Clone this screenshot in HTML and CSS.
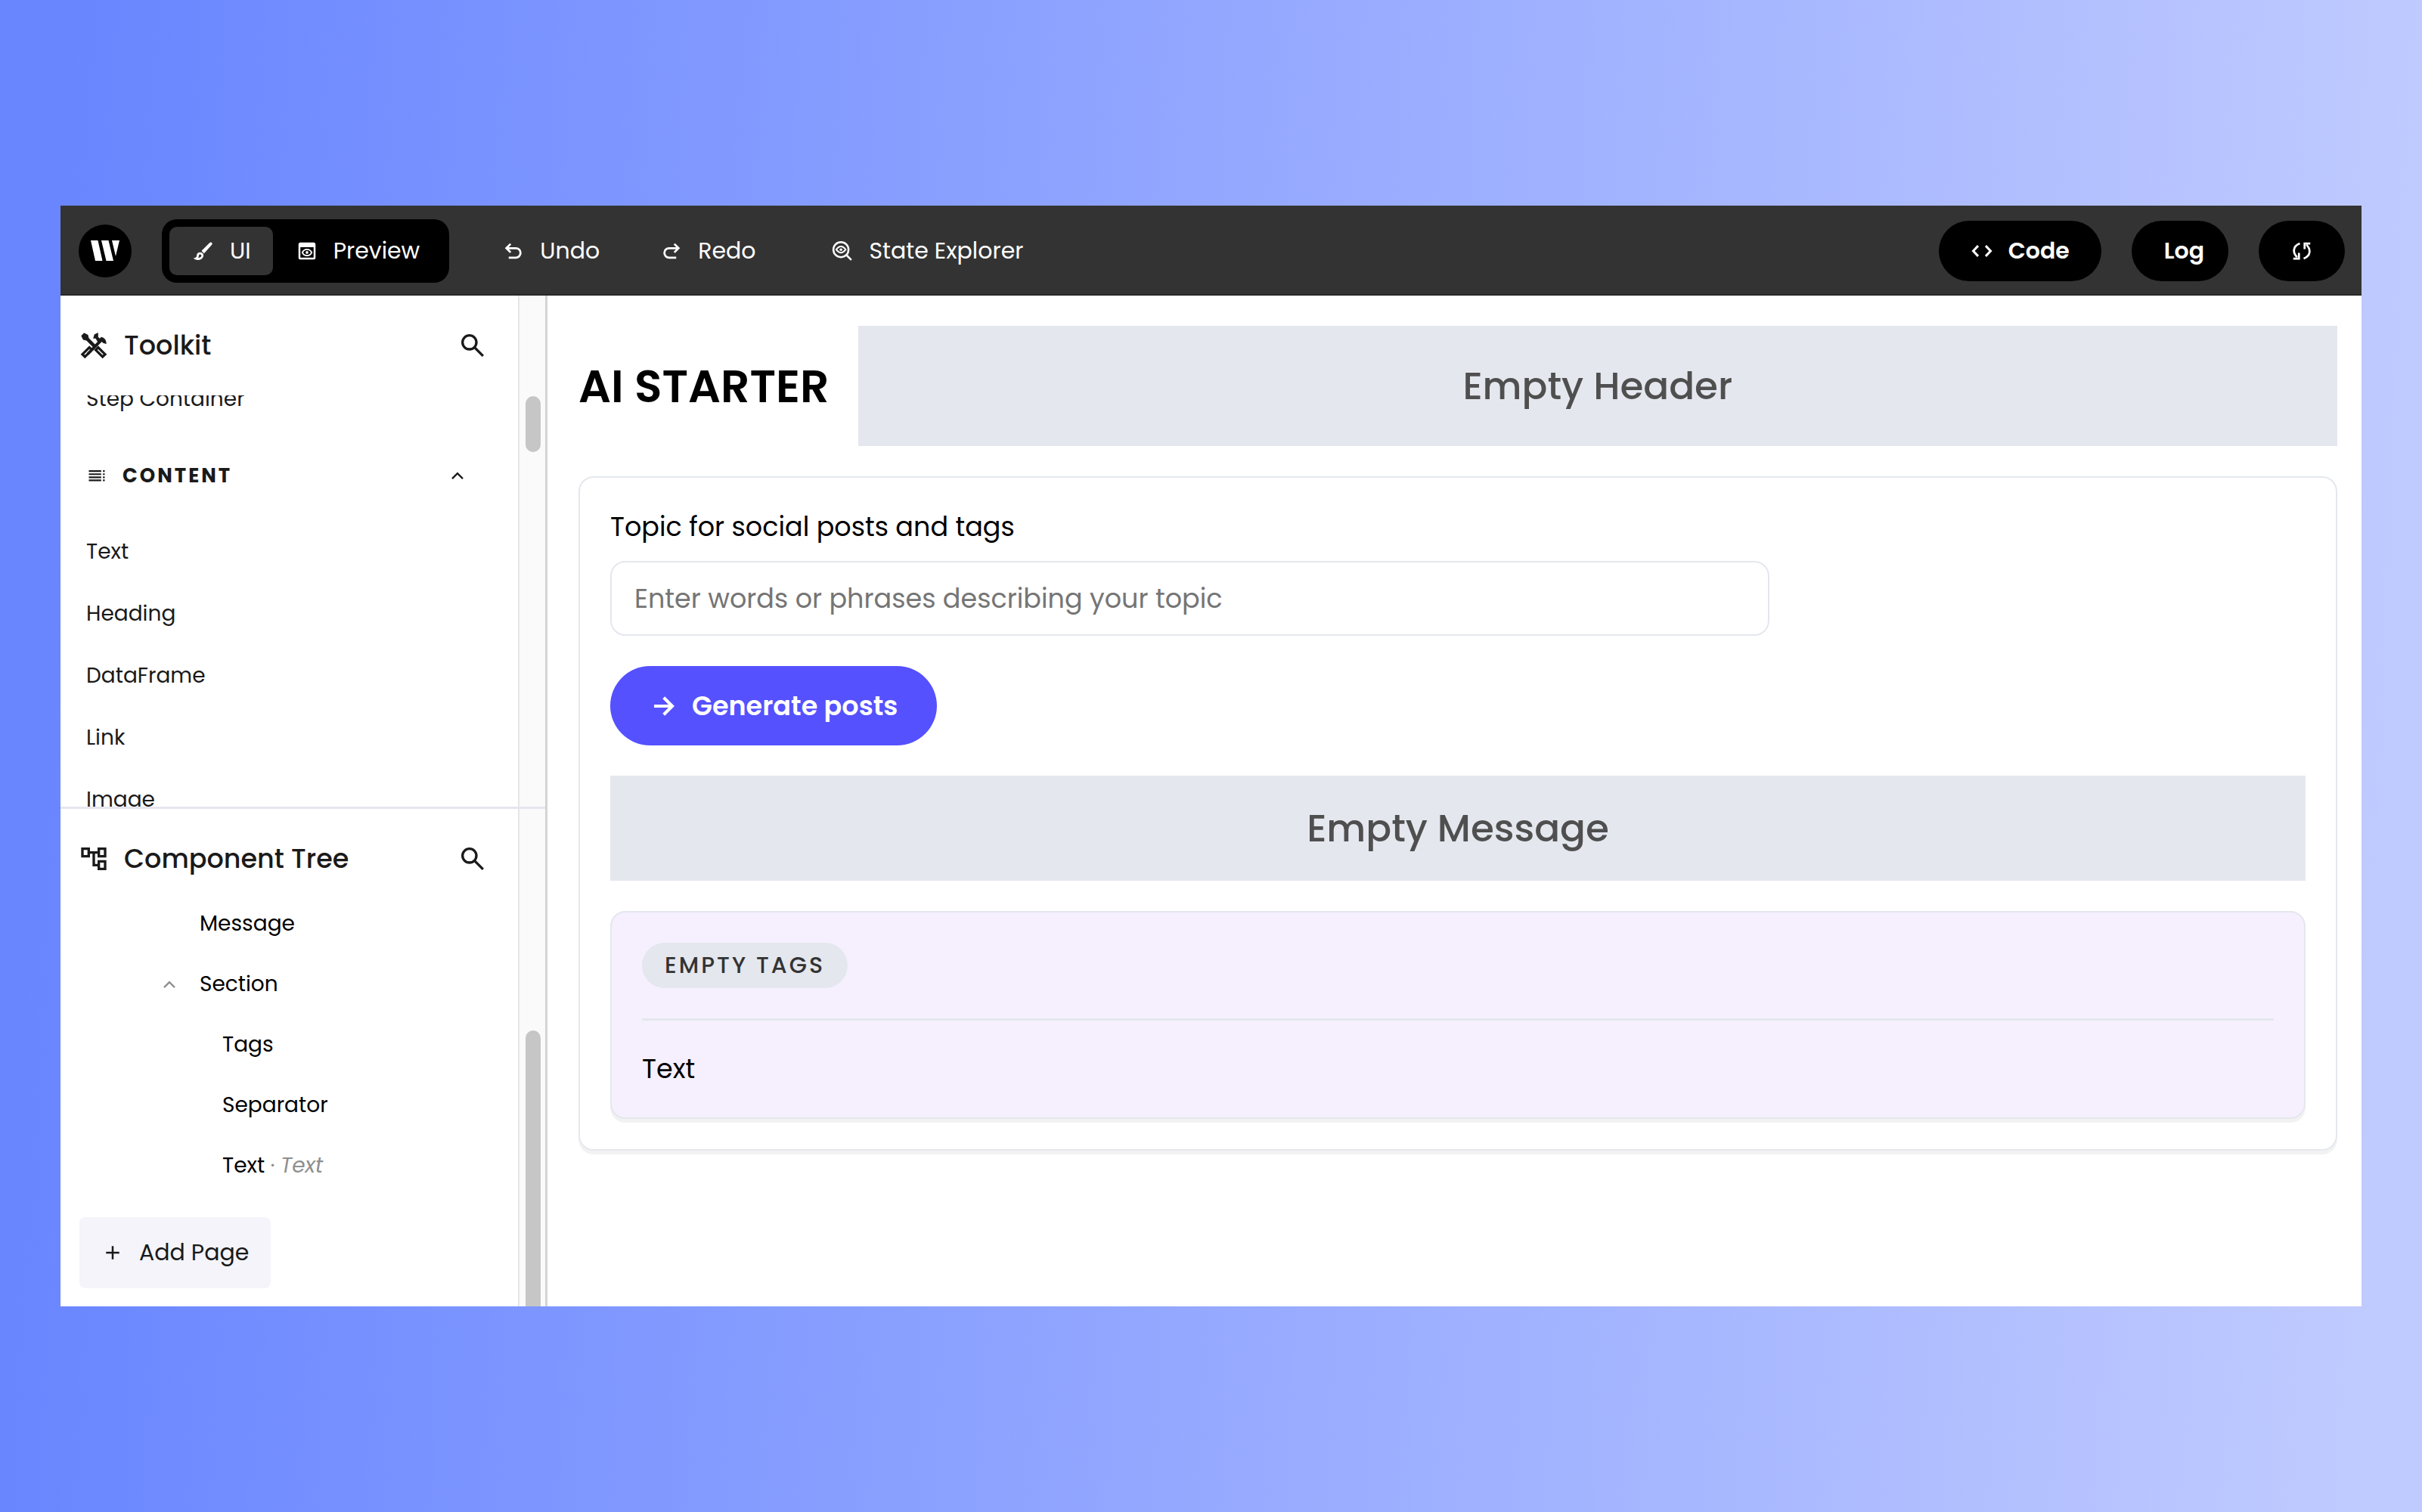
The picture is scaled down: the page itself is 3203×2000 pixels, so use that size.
FILE: index.html
```html
<!DOCTYPE html>
<html lang="en">
<head>
<meta charset="utf-8">
<title>AI Starter - Builder</title>
<link rel="stylesheet" href="styles.css">
</head>
<body>
<div class="window">
  <header class="topbar">
    <div class="logo">
      <svg viewBox="0 0 38 27" width="38" height="27" fill="currentColor"><path d="M0 0h9.500L15.500 27H6zM14 0h9.500l6.500 27h-9.500zM28 0h10l-5 21z"/></svg>
    </div>
    <div class="modes">
      <button class="mode active" type="button">
        <svg class="icon" viewBox="0 0 24 24" width="30" height="30"><path fill="none" stroke="currentColor" stroke-width="2.200" d="M4 20c1.500-.5 2-1.500 2-3s1-2.500 2.500-2.500 2.500 1 2.500 2.500-2 3.500-4.500 3.500c-1 0-2-.2-2.500-.5z"/><path fill="currentColor" d="M10 11.800 18.700 3.200q1.200-1 2.200 0t0 2.200L12.700 14.500z"/></svg>
        UI</button>
      <button class="mode" type="button">
        <svg class="icon" viewBox="0 0 24 24" width="30" height="30"><path fill="currentColor" fill-rule="evenodd" d="M5 3h14a2 2 0 0 1 2 2v14a2 2 0 0 1-2 2H5a2 2 0 0 1-2-2V5a2 2 0 0 1 2-2zm0 5v11h14V8zm7 1.500c2.700 0 4.900 1.600 5.800 4-.9 2.400-3.100 4-5.800 4s-4.900-1.600-5.800-4c.9-2.400 3.100-4 5.800-4zm0 1.600a4.400 4.400 0 0 0-4 2.400 4.400 4.400 0 0 0 8 0 4.400 4.400 0 0 0-4-2.400z"/><circle cx="12" cy="13.500" r="1.500" fill="currentColor"/></svg>
        Preview</button>
    </div>
    <nav class="actions">
      <button class="action" type="button">
        <svg class="icon" viewBox="0 0 24 24" width="30" height="30" fill="none" stroke="currentColor" stroke-width="2.200"><path d="M7 19h7.500a5 5 0 0 0 0-10H5M9 4.500 4.500 9 9 13.500"/></svg>
        Undo</button>
      <button class="action" type="button">
        <svg class="icon" viewBox="0 0 24 24" width="30" height="30" fill="none" stroke="currentColor" stroke-width="2.200"><path d="M17 19H9.500a5 5 0 0 1 0-10H19M15 4.500 19.500 9 15 13.500"/></svg>
        Redo</button>
      <button class="action explorer" type="button">
        <svg class="icon" viewBox="0 0 24 24" width="30" height="30" fill="none" stroke="currentColor" stroke-width="2"><circle cx="10.500" cy="10.500" r="8"/><path d="m16 16 5.500 5.500"/><path stroke-width="1.600" d="M5.500 10.500q5-6.500 10 0-5 6.500-10 0z"/><circle cx="10.500" cy="10.500" r="1.400" fill="currentColor" stroke="none"/></svg>
        State Explorer</button>
    </nav>
    <div class="tools">
      <button class="pill" type="button">
        <svg class="icon" viewBox="0 0 24 24" width="30" height="30" fill="none" stroke="currentColor" stroke-width="2.400"><path d="M8 6.500 2.800 12 8 17.500M16 6.500l5.200 5.500-5.200 5.500"/></svg>
        Code</button>
      <button class="pill pill-log" type="button">Log</button>
      <button class="pill" type="button" aria-label="Refresh">
        <svg class="icon" viewBox="0 0 24 24" width="30" height="30" fill="none" stroke="currentColor" stroke-width="2.200"><path d="M10 4C2 7 2.500 14 7 18.500M3 20h6v-6M14 20c8-3 7.500-10 3-14.500M21 4h-6v6"/></svg>
      </button>
    </div>
  </header>

  <div class="workspace">
    <aside class="sidebar">
      <section class="panel">
        <div class="panel-main">
          <div class="panel-head">
            <svg viewBox="0 0 24 24" width="40" height="40" fill="currentColor"><path d="M4.300 2 2 4.300l1.600 3.200 2.600.6 5.500 5.500 1.900-1.900-5.500-5.500L7.500 3.600z"/><path d="m12.500 3.200 3-1.400v3.400l1.300 1.300 1-1.200c2.800.5 4.200 2.500 4.200 5.500l-2.600-.8-1-1L8 19.500l-1.500-1.500L15 9l-1.500-2.500h-2z"/><path fill="none" stroke="currentColor" stroke-width="2" d="m3 19 5.500-5.500 2 2L5 21zM13.500 15.500l2-2L21 19l-2 2z"/></svg>
            <h2>Toolkit</h2>
            <button class="search" type="button" aria-label="Search toolkit"><svg viewBox="0 0 24 24" width="40" height="40" fill="none" stroke="currentColor" stroke-width="2"><circle cx="9.500" cy="9.500" r="5.500"/><path d="m13.600 13.600 6.700 6.700"/></svg></button>
          </div>
          <div class="toolkit-scroll">
            <ul class="kit"><li>Step Container</li></ul>
            <h3 class="kit-title">
              <svg viewBox="0 0 24 24" width="28" height="28" fill="none" stroke="currentColor" stroke-width="1.800"><path d="M3 7h14M3 10.500h14M3 14h14M3 17.500h14M19 7h2M19 10.500h2M19 14h2M19 17.500h2"/></svg>
              CONTENT
              <svg class="chevron" viewBox="0 0 24 24" width="28" height="28" fill="none" stroke="currentColor" stroke-width="2"><path d="m6 15.500 6-6 6 6"/></svg>
            </h3>
            <ul class="kit"><li>Text</li><li>Heading</li><li>DataFrame</li><li>Link</li><li>Image</li></ul>
          </div>
        </div>
        <div class="track track-top"><div class="thumb"></div></div>
      </section>
      <section class="panel tree-panel">
        <div class="panel-main">
          <div class="panel-head">
            <svg viewBox="0 0 24 24" width="40" height="40" fill="none" stroke="currentColor" stroke-width="2"><path d="M3 4h5v6H3zM16 4h5v6h-5zM16 14h5v6h-5zM8 7h8M12 7v10h4"/></svg>
            <h2>Component Tree</h2>
            <button class="search" type="button" aria-label="Search component tree"><svg viewBox="0 0 24 24" width="40" height="40" fill="none" stroke="currentColor" stroke-width="2"><circle cx="9.500" cy="9.500" r="5.500"/><path d="m13.600 13.600 6.700 6.700"/></svg></button>
          </div>
          <ul class="tree">
            <li>Message</li>
            <li class="open"><svg viewBox="0 0 24 24" width="28" height="28" fill="none" stroke="currentColor" stroke-width="2"><path d="m6 15.500 6-6 6 6"/></svg>Section</li>
            <li class="deep">Tags</li>
            <li class="deep">Separator</li>
            <li class="deep">Text <span class="dot">·</span> <em>Text</em></li>
          </ul>
          <button class="add-page" type="button">
            <svg viewBox="0 0 24 24" width="30" height="30" fill="none" stroke="currentColor" stroke-width="2"><path d="M12 5v14M5 12h14"/></svg>
            Add Page</button>
        </div>
        <div class="track track-bottom"><div class="thumb"></div></div>
      </section>
    </aside>

    <main class="canvas">
      <div class="app-head">
        <h1>AI STARTER</h1>
        <div class="empty header-slot">Empty Header</div>
      </div>
      <section class="card">
        <label for="topic">Topic for social posts and tags</label>
        <input id="topic" type="text" placeholder="Enter words or phrases describing your topic">
        <button class="generate" type="button">
          <svg viewBox="0 0 24 24" width="36" height="36" fill="none" stroke="currentColor" stroke-width="2.800"><path d="M4 12h15M12.500 4.500 20 12l-7.500 7.500"/></svg>
          Generate posts</button>
        <div class="empty message-slot">Empty Message</div>
        <section class="card results">
          <span class="tag">EMPTY TAGS</span>
          <hr>
          <p>Text</p>
        </section>
      </section>
    </main>
  </div>
</div>
</body>
</html>
```
FILE: styles.css
```css
* { box-sizing: border-box; }

body {
  margin: 0;
  min-height: 100vh;
  padding: 272px 80px;
  display: flex;
  background: linear-gradient(93deg, #6986ff 3%, #bfcaff 97%);
  font-family: Poppins, Inter, "Liberation Sans", sans-serif;
  color: #000;
}

button { border: 0; margin: 0; background: none; color: inherit; font: inherit; display: flex; align-items: center; }
ul { list-style: none; margin: 0; padding: 0; }
h1, h2, h3, p { margin: 0; }
svg { flex: none; display: block; }

.window { flex: 1; min-width: 0; display: flex; flex-direction: column; background: #fff; }

.topbar {
  height: 119px;
  flex: none;
  display: flex;
  align-items: center;
  padding: 0 22px 0 24px;
  background: #333;
  box-shadow: inset 0 -2px #282828;
  color: #fff;
  font-size: 30px;
  line-height: 40px;
}
.logo { width: 70px; height: 70px; border-radius: 50%; background: #000; display: flex; align-items: center; justify-content: center; }
.modes { display: flex; height: 84px; margin-left: 40px; padding: 10px; background: #000; border-radius: 20px; }
.mode { gap: 20px; padding: 0 29px 0 30px; border-radius: 10px; }
.mode.active { background: #333; }
.actions { display: flex; gap: 80px; margin-left: 70px; }
.action { gap: 20px; padding: 0; }
.explorer { margin-left: 20px; }
.tools { display: flex; gap: 40px; margin-left: auto; font-weight: 600; }
.pill { height: 80px; padding: 0 42px; gap: 20px; border-radius: 40px; background: #000; }
.pill-log { padding: 0 32px 0 43px; }

.workspace { flex: 1; display: flex; min-height: 0; }
.sidebar { width: 644px; flex: none; display: flex; flex-direction: column; border-right: 3px solid #d4d4d4; color: #1a1a1a; }
.panel { display: flex; height: 676px; overflow: hidden; }
.panel-main { flex: 1; min-width: 0; display: flex; flex-direction: column; }
.tree-panel { height: auto; flex: 1; border-top: 3px solid #e6e6f0; }
.panel-head { display: flex; align-items: center; gap: 20px; height: 132px; flex: none; padding: 0 40px 0 24px; }
.panel-head h2 { font-size: 35px; line-height: 48px; font-weight: 500; }
.search { margin-left: auto; padding: 0; }
.toolkit-scroll { flex: 1; overflow: hidden; display: flex; flex-direction: column; justify-content: flex-end; margin-bottom: -32px; }
.kit { flex: none; padding-left: 34px; font-size: 28px; line-height: 82px; }
.kit-title { flex: none; display: flex; align-items: center; gap: 20px; height: 120px; padding: 0 66px 0 34px; font-size: 26px; line-height: 40px; font-weight: 700; letter-spacing: 3px; }
.chevron { margin-left: auto; }

.track { width: 36px; flex: none; padding-left: 1px; border-left: 2px solid #e6e6e6; background: #fafafa; display: flex; flex-direction: column; align-items: center; }
.thumb { width: 20px; border-radius: 10px; background: #c6c6c6; }
.track-top { padding-top: 133px; }
.track-top .thumb { height: 74px; }
.track-bottom { padding-top: 293px; }
.track-bottom .thumb { flex: 1; border-radius: 10px 10px 0 0; }

.tree { font-size: 28px; line-height: 80px; color: #000; margin-top: -20px; }
.tree li { padding-left: 184px; }
.tree li.open { display: flex; align-items: center; gap: 26px; padding-left: 130px; }
.tree .open svg, .tree em, .dot { color: #8f8f8f; }
.tree li.deep { padding-left: 214px; }
.add-page { align-self: flex-start; height: 94px; margin: auto 0 24px 25px; padding: 0 29px; gap: 20px; border-radius: 8px; background: #f4f4fa; font-size: 30px; }

.canvas { flex: 1; min-width: 0; padding: 40px 32px 40px 41px; display: flex; flex-direction: column; gap: 40px; font-size: 35px; line-height: 48px; }
.app-head { display: flex; align-items: center; gap: 38px; }
.app-head h1 { font-size: 60px; line-height: 64px; font-weight: 600; white-space: nowrap; }
.empty { display: flex; align-items: center; justify-content: center; background: #e4e7ee; color: #4f4f4f; font-size: 50px; line-height: 60px; font-weight: 500; }
.header-slot { flex: 1; height: 159px; }
.card { display: flex; flex-direction: column; align-items: flex-start; border: 2px solid #e4e7ed; border-radius: 20px; padding: 40px; box-shadow: 0 5px 0 #f2f2f2; }
.card label { line-height: 50px; }
.card input { width: 1533px; max-width: 100%; height: 99px; margin-top: 20px; padding: 0 30px; border: 2px solid #e4e7ed; border-radius: 20px; background: #fff; font: inherit; }
.card input::placeholder { color: #757575; opacity: 1; }
.generate { height: 105px; margin-top: 40px; padding: 0 52px; gap: 20px; border-radius: 53px; background: #5551ff; color: #fff; font-weight: 600; }
.message-slot { align-self: stretch; height: 139px; margin-top: 40px; }
.results { align-self: stretch; margin-top: 40px; background: #f6f0fe; }
.tag { height: 60px; padding: 0 30px; border-radius: 30px; background: #e4e7ed; color: #333; font-size: 30px; line-height: 60px; font-weight: 500; letter-spacing: 3px; }
.results hr { align-self: stretch; height: 3px; margin: 40px 0; border: 0; background: #e4e7ed; }
```
